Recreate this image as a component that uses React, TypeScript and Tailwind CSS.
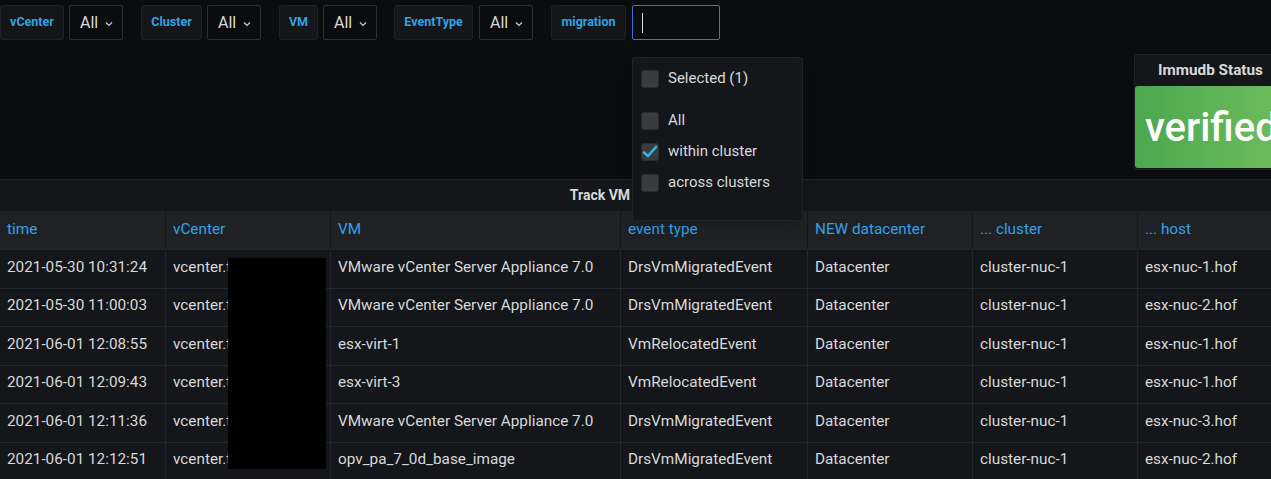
import React from "react";

const font = { fontFamily: "Roboto, 'Liberation Sans', sans-serif" };

function Chevron() {
  return (
    <svg width="8" height="6" viewBox="0 0 8 6" className="ml-[7px] mt-[2px]">
      <path d="M1 1.5 L4 4.5 L7 1.5" fill="none" stroke="#c7d0d9" strokeWidth="1.2" />
    </svg>
  );
}

function VarLabel({ text, w }: { text: string; w: string }) {
  return (
    <div className={`${w} shrink-0 h-[35px] flex items-center justify-center bg-[#141619] border border-[#202226] rounded-[3px] text-[12.5px] font-bold text-[#33a2e5]`}>
      {text}
    </div>
  );
}

function AllBox() {
  return (
    <div className="w-[54px] shrink-0 h-[35px] flex items-center pl-[10px] bg-[#0b0c0e] border border-[#2c3035] rounded-[2px] text-[16px] text-[#d8d9da]">
      All
      <Chevron />
    </div>
  );
}

function Checkbox({ checked }: { checked?: boolean }) {
  return (
    <div className="w-[18px] h-[18px] rounded-[3px] bg-[#393b40] border border-[#2a2c30] flex items-center justify-center shrink-0">
      {checked && (
        <svg width="16" height="14" viewBox="0 0 16 14">
          <path d="M2 7.5 L6 11 L14 2" fill="none" stroke="#33b5e5" strokeWidth="2.6" strokeLinecap="round" strokeLinejoin="round" />
        </svg>
      )}
    </div>
  );
}

const cols = [
  { name: "time", w: "w-[165px]" },
  { name: "vCenter", w: "w-[165px]" },
  { name: "VM", w: "w-[290px]" },
  { name: "event type", w: "w-[187px]" },
  { name: "NEW datacenter", w: "w-[165px]" },
  { name: "... cluster", w: "w-[165px]" },
  { name: "... host", w: "w-[134px]" },
];

const rows = [
  ["2021-05-30 10:31:24", "vcenter.t", "VMware vCenter Server Appliance 7.0", "DrsVmMigratedEvent", "Datacenter", "cluster-nuc-1", "esx-nuc-1.hof"],
  ["2021-05-30 11:00:03", "vcenter.t", "VMware vCenter Server Appliance 7.0", "DrsVmMigratedEvent", "Datacenter", "cluster-nuc-1", "esx-nuc-2.hof"],
  ["2021-06-01 12:08:55", "vcenter.t", "esx-virt-1", "VmRelocatedEvent", "Datacenter", "cluster-nuc-1", "esx-nuc-1.hof"],
  ["2021-06-01 12:09:43", "vcenter.t", "esx-virt-3", "VmRelocatedEvent", "Datacenter", "cluster-nuc-1", "esx-nuc-1.hof"],
  ["2021-06-01 12:11:36", "vcenter.t", "VMware vCenter Server Appliance 7.0", "DrsVmMigratedEvent", "Datacenter", "cluster-nuc-1", "esx-nuc-3.hof"],
  ["2021-06-01 12:12:51", "vcenter.t", "opv_pa_7_0d_base_image", "DrsVmMigratedEvent", "Datacenter", "cluster-nuc-1", "esx-nuc-2.hof"],
];

export default function App() {
  return (
    <div style={font} className="relative w-[1271px] h-[479px] overflow-hidden bg-[#0b0c0e]">
      {/* variables row */}
      <div className="flex items-center pt-[5px] h-[40px]">
        <div className="flex gap-[5px]">
          <VarLabel text="vCenter" w="w-[64px]" />
          <AllBox />
        </div>
        <div className="flex gap-[5px] ml-[18px]">
          <VarLabel text="Cluster" w="w-[61px]" />
          <AllBox />
        </div>
        <div className="flex gap-[5px] ml-[18px]">
          <VarLabel text="VM" w="w-[39px]" />
          <AllBox />
        </div>
        <div className="flex gap-[6px] ml-[17px]">
          <VarLabel text="EventType" w="w-[79px]" />
          <AllBox />
        </div>
        <div className="flex gap-[6px] ml-[18px]">
          <VarLabel text="migration" w="w-[75px]" />
          <div className="w-[88px] shrink-0 h-[35px] flex items-center pl-[9px] bg-[#0b0c0e] border border-[#3d71d9] rounded-[2px]">
            <div className="w-px h-[20px] bg-[#d8d9da]" />
          </div>
        </div>
      </div>

      {/* middle area with Immudb panel */}
      <div className="flex h-[139px]">
        <div className="shrink-0 ml-[1134px] mt-[14px] w-[170px] h-[116px] bg-[#141619] border border-[#202226] rounded-[3px] flex flex-col">
          <div className="h-[31px] flex items-center pl-[23px] text-[15.3px] font-bold text-[#d8d9da]">Immudb Status</div>
          <div className="flex-1 mb-px rounded-[3px] bg-gradient-to-r from-[#4aa84e] to-[#72bf5f] flex items-center pl-[10px]">
            <span className="text-[40px] font-medium text-white leading-none mt-[2px]">verified</span>
          </div>
        </div>
      </div>

      {/* table panel */}
      <div className="bg-[#141619] border-t border-[#202226] text-[15.3px]">
        <div className="h-[31px] flex items-center justify-center text-[14px] font-bold text-[#d8d9da]">
          <span>Track VM migrations</span>
        </div>
        <div className="flex h-[38px] bg-[#1f2125]">
          {cols.map((c, i) => (
            <div key={c.name} className={`${c.w} shrink-0 flex items-center pl-[7px] pb-[1px] text-[#33a2e5] ${i > 0 ? "border-l border-[#14161a]" : ""}`}>
              {c.name}
            </div>
          ))}
        </div>
        {rows.map((r, ri) => (
          <div key={ri} className="flex h-[38.5px] border-t border-[#22252b] bg-[#141619]">
            {r.map((v, i) => (
              <div key={i} className={`${cols[i].w} shrink-0 flex items-center pl-[7px] pb-[3px] text-[#d8d9da] whitespace-nowrap overflow-hidden ${i > 0 ? "border-l border-[#22252b]" : ""}`}>
                {v}
              </div>
            ))}
          </div>
        ))}
      </div>

      {/* redaction */}
      <div className="absolute left-[228px] top-[258px] w-[98px] h-[211px] bg-black" />

      {/* dropdown menu */}
      <div className="absolute left-[632px] top-[57px] w-[171px] h-[164px] bg-[#141619] border border-[#202226] rounded-[2px] shadow-lg text-[15px] text-[#d8d9da]">
        <div className="flex items-center gap-[9px] pl-[8px] pt-[6px] h-[29px] box-content">
          <Checkbox />
          <span>Selected (1)</span>
        </div>
        <div className="flex flex-col mt-[12px]">
          <div className="flex items-center gap-[9px] pl-[8px] h-[31px]">
            <Checkbox />
            <span>All</span>
          </div>
          <div className="flex items-center gap-[9px] pl-[8px] h-[31px]">
            <Checkbox checked />
            <span>within cluster</span>
          </div>
          <div className="flex items-center gap-[9px] pl-[8px] h-[31px]">
            <Checkbox />
            <span>across clusters</span>
          </div>
        </div>
      </div>
    </div>
  );
}
